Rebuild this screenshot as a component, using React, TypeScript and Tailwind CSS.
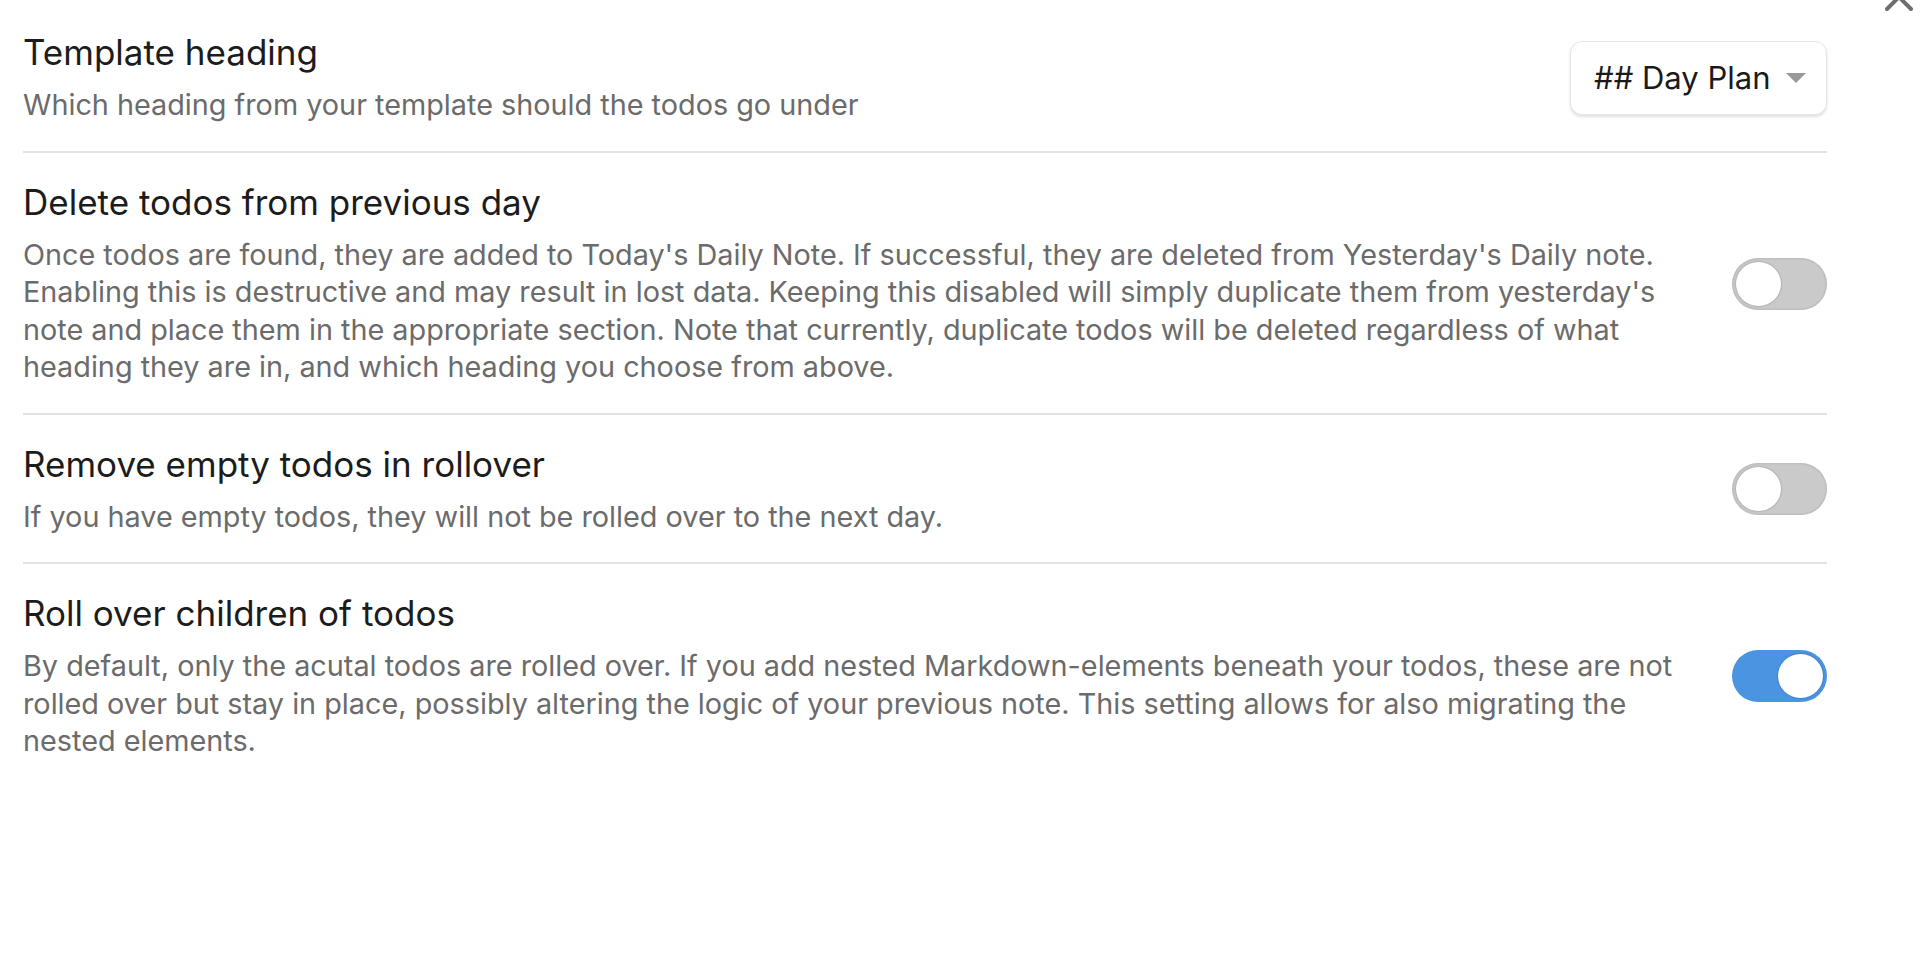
import React, { useState } from "react";

type Item = {
  name: string;
  desc: string;
  control: "dropdown" | "toggle";
  on?: boolean;
};

const items: Item[] = [
  {
    name: "Template heading",
    desc: "Which heading from your template should the todos go under",
    control: "dropdown",
  },
  {
    name: "Delete todos from previous day",
    desc: "Once todos are found, they are added to Today's Daily Note. If successful, they are deleted from Yesterday's Daily note. Enabling this is destructive and may result in lost data. Keeping this disabled will simply duplicate them from yesterday's note and place them in the appropriate section. Note that currently, duplicate todos will be deleted regardless of what heading they are in, and which heading you choose from above.",
    control: "toggle",
    on: false,
  },
  {
    name: "Remove empty todos in rollover",
    desc: "If you have empty todos, they will not be rolled over to the next day.",
    control: "toggle",
    on: false,
  },
  {
    name: "Roll over children of todos",
    desc: "By default, only the acutal todos are rolled over. If you add nested Markdown-elements beneath your todos, these are not rolled over but stay in place, possibly altering the logic of your previous note. This setting allows for also migrating the nested elements.",
    control: "toggle",
    on: true,
  },
];

const Toggle = ({ initial }: { initial: boolean }) => {
  const [on, setOn] = useState(initial);
  return (
    <button
      onClick={() => setOn(!on)}
      className={`relative w-[95px] h-[52px] rounded-full flex items-center px-[4px] shrink-0 ${
        on
          ? "bg-[#4a94e2] justify-end"
          : "bg-[#cacaca] shadow-[inset_0_0_3px_rgba(0,0,0,0.18)] justify-start"
      }`}
    >
      <span className="w-[45px] h-[44px] rounded-full bg-white shadow-[0_0_2px_rgba(0,0,0,0.35)]" />
    </button>
  );
};

const Dropdown = () => (
  <div className="w-[257px] h-[74px] rounded-[12px] bg-white border border-[#e6e6e6] shadow-[0_2px_3px_rgba(0,0,0,0.12)] flex items-center pl-[23px] pr-[20px] shrink-0">
    <span className="text-[31px] text-[#1a1a1a] flex-1">## Day Plan</span>
    <svg width="20" height="10" viewBox="0 0 20 10" className="ml-2">
      <path d="M0 0 L20 0 L10 10 Z" fill="#999999" />
    </svg>
  </div>
);

export default function App() {
  return (
    <div
      className="relative min-h-screen w-full bg-white"
      style={{ fontFamily: "Inter, 'Noto Sans', sans-serif" }}
    >
      <div className="absolute right-[19px] top-[-17px] text-[#6e6e6e]">
        <svg width="28" height="28" viewBox="0 0 28 28" fill="none" stroke="currentColor" strokeWidth="4" strokeLinecap="round">
          <path d="M2 2 L26 26 M26 2 L2 26" />
        </svg>
      </div>

      <div className="w-[1804px] ml-[23px] pt-[3px]">
        {items.map((item, i) => (
          <div
            key={item.name}
            className={`flex items-center pt-[29px] pb-[27px] ${i > 0 ? "border-t-2 border-[#e3e3e3]" : ""}`}
          >
            <div className="flex-1 mr-8">
              <div className="text-[35px] leading-[40px] text-[#1c1c1c]">{item.name}</div>
              <div className="mt-[14px] text-[28.8px] leading-[37.5px] text-[#6b6b6b]">{item.desc}</div>
            </div>
            {item.control === "dropdown" ? <Dropdown /> : <Toggle initial={!!item.on} />}
          </div>
        ))}
      </div>
    </div>
  );
}
